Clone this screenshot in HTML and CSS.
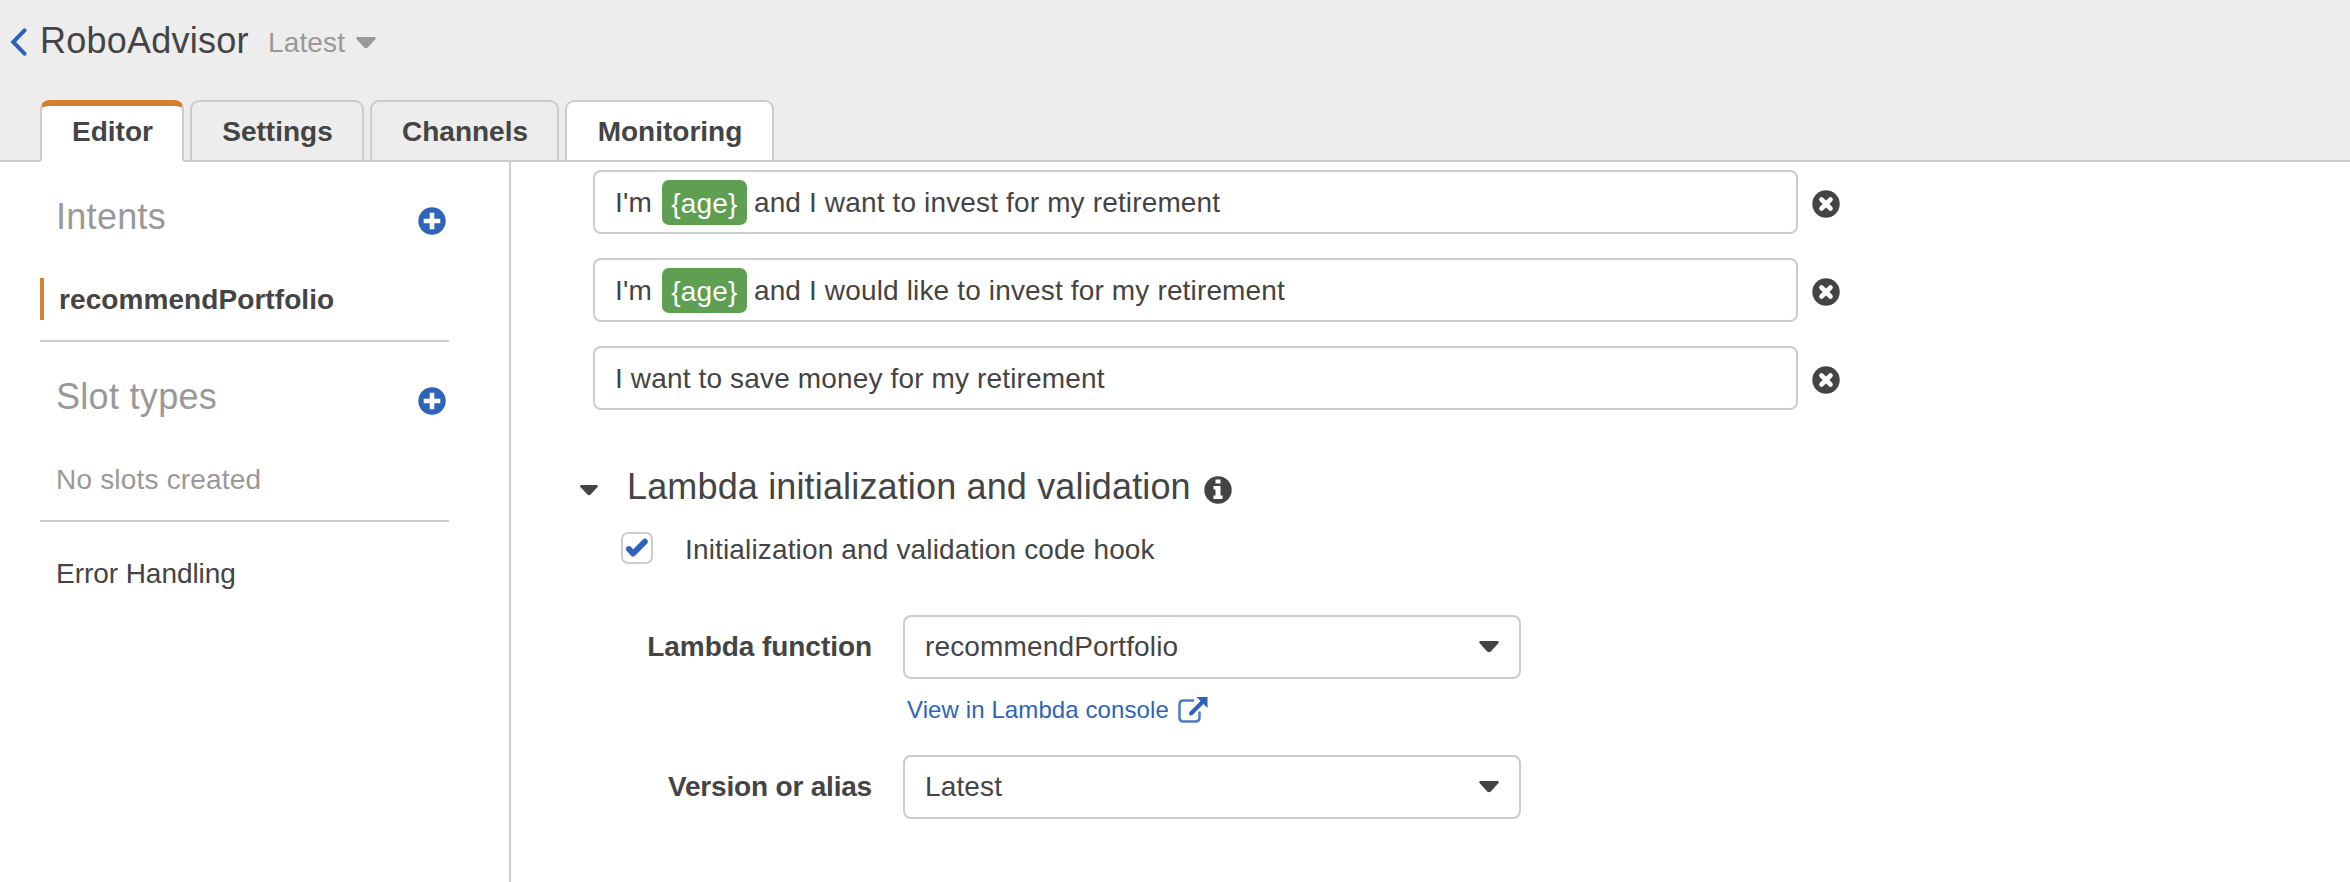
FILE: index.html
```html
<!DOCTYPE html>
<html lang="en">
<head>
<meta charset="utf-8">
<title>RoboAdvisor</title>
<link rel="stylesheet" href="styles.css">
</head>
<body>
<svg class="defs" width="0" height="0" aria-hidden="true">
  <symbol id="plus" viewBox="0 0 28 28"><circle cx="14" cy="14" r="13.7" fill="currentColor"/><path d="M14 8v12M8 14h12" stroke="#fff" stroke-width="4.6" stroke-linecap="square"/></symbol>
  <symbol id="remove" viewBox="0 0 28 28"><circle cx="14" cy="14" r="13.7" fill="currentColor"/><path d="M9.5 9.500l9 9M18.500 9.500l-9 9" stroke="#fff" stroke-width="4.6" stroke-linecap="round"/></symbol>
  <symbol id="caret" viewBox="0 0 20 12"><path d="M1.2 0h17.6q1.6 .6 .7 2L11.8 10.4q-1.8 1.6-3.6 0L.5 2Q-.4 .6 1.2 0z" fill="currentColor"/></symbol>
</svg>
<header class="header">
  <div class="title-bar">
    <svg class="back" viewBox="0 0 17 28"><path d="M14.500 2.300L3.200 14l11.300 11.700" fill="none" stroke="currentColor" stroke-width="4" stroke-linecap="round" stroke-linejoin="miter"/></svg>
    <h1 class="title">RoboAdvisor</h1>
    <span class="version">Latest</span>
    <svg class="caret version-caret"><use href="#caret"/></svg>
  </div>
  <nav class="tabs">
    <a class="tab tab-editor active">Editor</a>
    <a class="tab tab-settings">Settings</a>
    <a class="tab tab-channels">Channels</a>
    <a class="tab tab-monitoring">Monitoring</a>
  </nav>
</header>
<div class="body">
  <aside class="sidebar">
    <section class="group">
      <div class="group-head"><h2>Intents</h2><svg class="icon"><use href="#plus"/></svg></div>
      <div class="item selected">recommendPortfolio</div>
    </section>
    <section class="group">
      <div class="group-head"><h2>Slot types</h2><svg class="icon"><use href="#plus"/></svg></div>
      <div class="item empty">No slots created</div>
    </section>
    <div class="error-link">Error Handling</div>
  </aside>
  <main class="main">
    <div class="utterance"><div class="field"><span>I'm</span><span class="slot">{age}</span><span>and I want to invest for my retirement</span></div><svg class="icon"><use href="#remove"/></svg></div>
    <div class="utterance"><div class="field"><span>I'm</span><span class="slot">{age}</span><span>and I would like to invest for my retirement</span></div><svg class="icon"><use href="#remove"/></svg></div>
    <div class="utterance"><div class="field"><span>I want to save money for my retirement</span></div><svg class="icon"><use href="#remove"/></svg></div>
    <div class="section-head">
      <svg class="caret section-caret"><use href="#caret"/></svg>
      <h2>Lambda initialization and validation</h2>
      <svg class="icon info" viewBox="0 0 28 28"><circle cx="14" cy="14" r="13.7" fill="currentColor"/><path d="M11.500 3.500h5v4h-5zM9.500 10h7v9.500h2V23h-9v-3.500h2v-6h-2z" fill="#fff"/></svg>
    </div>
    <div class="hook">
      <span class="checkbox"><svg viewBox="0 0 24 24"><path d="M3.900 13l4.100 4.600L19.900 5.600" fill="none" stroke="currentColor" stroke-width="5.800" stroke-linecap="round" stroke-linejoin="round"/></svg></span>
      <span>Initialization and validation code hook</span>
    </div>
    <div class="form">
      <label>Lambda function</label>
      <div class="select"><span>recommendPortfolio</span><svg class="caret"><use href="#caret"/></svg></div>
      <a class="console"><span>View in Lambda console</span><svg class="external" viewBox="0 0 30 28"><path d="M16 4.500H5.500q-4 0-4 4v13q0 4 4 4h12q4 0 4-4v-6" fill="none" stroke="currentColor" stroke-width="2.500" opacity=".85"/><path d="M13 17.500L24 6.500" stroke="currentColor" stroke-width="4" stroke-linecap="round"/><path d="M18.500 1H29.500v11z" fill="currentColor"/></svg></a>
      <label class="alias">Version or alias</label>
      <div class="select"><span>Latest</span><svg class="caret"><use href="#caret"/></svg></div>
    </div>
  </main>
</div>
</body>
</html>
```
FILE: styles.css
```css
* { box-sizing: border-box; }
body { margin: 0; height: 882px; overflow: hidden; display: flex; flex-direction: column; background: #fff; color: #444; font: 28px/36px "Liberation Sans", Arial, sans-serif; }
h1, h2 { margin: 0; font-weight: 400; font-size: 36px; line-height: 44px; }
span, h2 { white-space: nowrap; }
svg { display: block; flex: none; }
.defs { position: absolute; }
.icon { width: 28px; height: 28px; }
.caret { width: 20px; height: 12px; }

.header { height: 162px; background: #ededed; border-bottom: 2px solid #ccc; display: flex; flex-direction: column; justify-content: space-between; flex: none; }
.title-bar { display: flex; align-items: center; height: 82px; padding-left: 10px; }
.back { width: 17px; height: 28px; color: #2d64b9; margin-top: 1px; }
.title { width: 229px; padding-left: 13px; letter-spacing: .25px; }
.version { width: 87px; padding: 3px 0 0 12px; color: #999; letter-spacing: .15px; }
.version-caret { color: #999; margin: 4px 0 0 13px; }
.tabs { display: flex; gap: 6px; padding-left: 40px; margin-bottom: -2px; }
.tab { height: 62px; border: 2px solid #ccc; border-radius: 9px 9px 0 0; padding: 12px 0 0 1px; text-align: center; font-weight: 700; }
.tab-editor { width: 144px; }
.tab-settings { width: 174px; }
.tab-channels { width: 189px; }
.tab-monitoring { width: 209px; background: #fff; }
.active { background: #fff; border-top: 6px solid #d57f30; border-bottom-color: #fff; padding-top: 8px; }

.body { flex: 1; display: flex; }
.sidebar { width: 511px; border-right: 2px solid #ccc; padding: 0 60px 0 40px; }
.group { height: 180px; border-bottom: 2px solid #ccc; }
.group-head { display: flex; justify-content: space-between; padding: 33px 3px 0 16px; height: 116px; color: #999; letter-spacing: .3px; }
.group-head .icon { color: #2d64b9; margin-top: 12px; }
.item { height: 42px; padding: 4px 0 0 16px; }
.selected { border-left: 4px solid #d57f30; font-weight: 700; padding-left: 15px; letter-spacing: .08px; }
.empty { color: #999; letter-spacing: .19px; }
.error-link { padding: 34px 0 0 16px; letter-spacing: -.05px; }

.main { padding: 8px 0 0 82px; letter-spacing: .15px; }
.utterance { display: flex; align-items: center; gap: 14px; height: 64px; margin-bottom: 24px; }
.utterance .icon { margin-top: 3px; }
.field { width: 1205px; height: 64px; border: 2px solid #ccc; border-radius: 8px; display: flex; align-items: center; padding: 2px 20px 0; }
.slot { width: 85px; height: 45px; line-height: 47px; margin: -2px 7px 0 10px; background: #5f9f52; border-radius: 7px; color: #fff; text-align: center; }
.section-head { display: flex; align-items: center; margin: 53px 0 0 -13px; height: 48px; }
.section-caret { width: 18px; height: 11px; margin: 7px 29px 0 0; }
.info { margin: 6px 0 0 13px; }
.hook { display: flex; align-items: center; gap: 32px; margin: 21px 0 0 28px; height: 36px; }
.checkbox { width: 32px; height: 32px; border: 2px solid #ccc; border-radius: 7px; color: #2d64b9; margin-top: -4px; }
.checkbox svg { width: 28px; height: 28px; padding: 2px; }
.form { display: grid; grid-template-columns: 279px 618px; grid-template-rows: 64px 76px 64px; column-gap: 31px; margin-top: 47px; align-items: center; }
.form label { text-align: right; font-weight: 700; letter-spacing: -.05px; }
.form .alias { letter-spacing: -.19px; }
.select { height: 64px; border: 2px solid #ccc; border-radius: 8px; display: flex; align-items: center; justify-content: space-between; padding: 0 20px; }
.console { grid-column: 2; display: flex; align-items: center; gap: 9px; padding-left: 4px; font-size: 24px; letter-spacing: .1px; color: #2d64b9; margin-top: -14px; }
.external { width: 30px; height: 28px; }
```
